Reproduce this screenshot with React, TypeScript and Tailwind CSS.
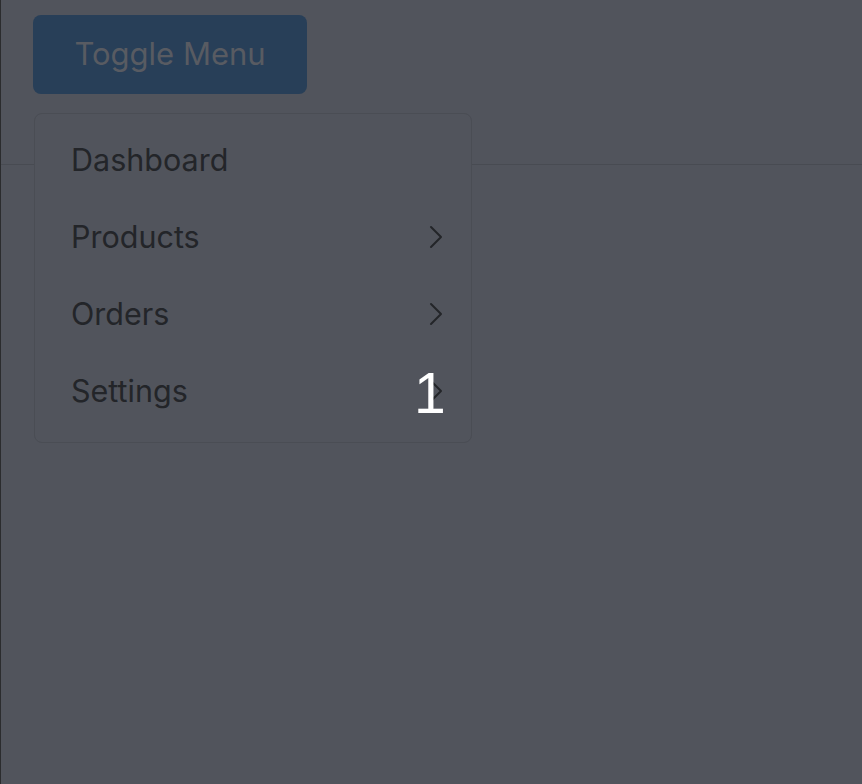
import React from "react";

const items = [
  { label: "Dashboard", sub: false },
  { label: "Products", sub: true },
  { label: "Orders", sub: true },
  { label: "Settings", sub: true },
];

function Chevron() {
  return (
    <svg
      width="32"
      height="32"
      viewBox="0 0 24 24"
      fill="none"
      stroke="currentColor"
      strokeWidth={1.5}
      strokeLinecap="round"
      strokeLinejoin="round"
    >
      <path d="m8.25 4.5 7.5 7.5-7.5 7.5" />
    </svg>
  );
}

export default function App() {
  return (
    <div
      className="relative min-h-screen w-full bg-[#51545c] border-l border-[#2b2c2e]"
      style={{ fontFamily: "Inter, 'Noto Sans', sans-serif" }}
    >
      <header className="h-[165px] border-b border-[#484b52] pl-[32px] pt-[15px]">
        <button className="w-[274px] h-[79px] rounded-lg bg-[#283f58] pb-[3px] text-[#585b62] text-[31px] leading-none">
          Toggle Menu
        </button>
      </header>

      <div className="absolute left-[33px] top-[113px] w-[438px] rounded-lg border border-[#4a4d54] bg-[#51545c] pt-[7px] pb-[13px]">
        {items.map((item) => (
          <div
            key={item.label}
            className="flex h-[77px] items-center justify-between pl-[36px] pr-[19px] text-[30.5px] text-[#232529]"
          >
            <span>{item.label}</span>
            {item.sub && (
              <span className="text-[#232529]">
                <Chevron />
              </span>
            )}
          </div>
        ))}
      </div>

      <div
        className="absolute left-[413px] top-[365px] text-[57px] leading-none text-white"
        style={{ fontFamily: "'Liberation Sans', Arial, sans-serif" }}
      >
        1
      </div>
    </div>
  );
}
